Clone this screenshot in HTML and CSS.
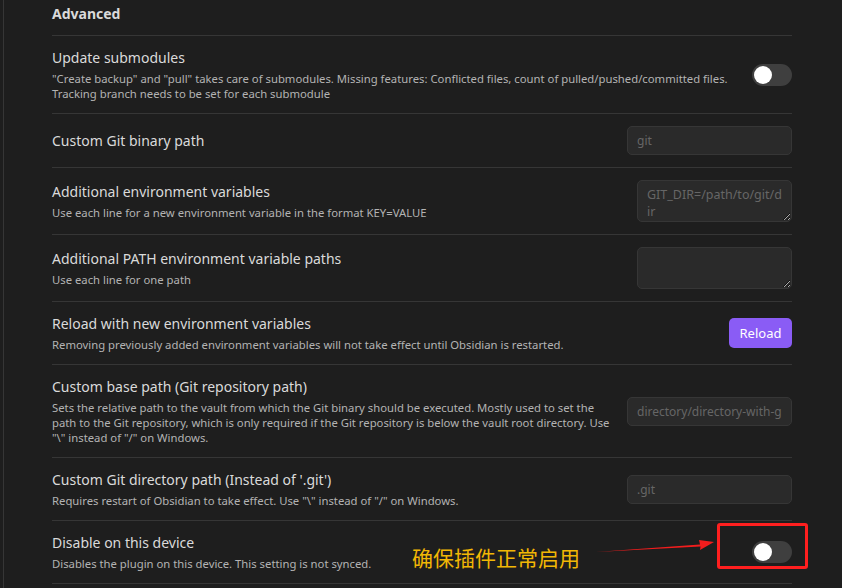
FILE: index.html
```html
<!DOCTYPE html>
<html lang="en">
<head>
<meta charset="utf-8">
<title>Git settings – Advanced</title>
<link rel="stylesheet" href="styles.css">
</head>
<body>
<div class="app">
  <div class="rail"></div>
  <main class="settings">
    <div class="setting-item heading">
      <div class="setting-info"><div class="setting-name">Advanced</div></div>
    </div>

    <div class="setting-item">
      <div class="setting-info">
        <div class="setting-name">Update submodules</div>
        <div class="setting-desc">"Create backup" and "pull" takes care of submodules. Missing features: Conflicted files, count of pulled/pushed/committed files.<br>Tracking branch needs to be set for each submodule</div>
      </div>
      <div class="setting-control"><div class="toggle"><span class="knob"></span></div></div>
    </div>

    <div class="setting-item">
      <div class="setting-info">
        <div class="setting-name">Custom Git binary path</div>
      </div>
      <div class="setting-control"><input class="text-input" type="text" placeholder="git"></div>
    </div>

    <div class="setting-item">
      <div class="setting-info">
        <div class="setting-name">Additional environment variables</div>
        <div class="setting-desc">Use each line for a new environment variable in the format KEY=VALUE</div>
      </div>
      <div class="setting-control"><textarea class="text-area" placeholder="GIT_DIR=/path/to/git/dir"></textarea></div>
    </div>

    <div class="setting-item">
      <div class="setting-info">
        <div class="setting-name">Additional PATH environment variable paths</div>
        <div class="setting-desc">Use each line for one path</div>
      </div>
      <div class="setting-control"><textarea class="text-area"></textarea></div>
    </div>

    <div class="setting-item">
      <div class="setting-info">
        <div class="setting-name">Reload with new environment variables</div>
        <div class="setting-desc">Removing previously added environment variables will not take effect until Obsidian is restarted.</div>
      </div>
      <div class="setting-control"><button class="mod-cta" type="button">Reload</button></div>
    </div>

    <div class="setting-item">
      <div class="setting-info">
        <div class="setting-name">Custom base path (Git repository path)</div>
        <div class="setting-desc">Sets the relative path to the vault from which the Git binary should be executed. Mostly used to set the<br>path to the Git repository, which is only required if the Git repository is below the vault root directory. Use<br>"\" instead of "/" on Windows.</div>
      </div>
      <div class="setting-control"><input class="text-input" type="text" placeholder="directory/directory-with-git-repo"></div>
    </div>

    <div class="setting-item">
      <div class="setting-info">
        <div class="setting-name">Custom Git directory path (Instead of '.git')</div>
        <div class="setting-desc">Requires restart of Obsidian to take effect. Use "\" instead of "/" on Windows.</div>
      </div>
      <div class="setting-control"><input class="text-input" type="text" placeholder=".git"></div>
    </div>

    <div class="setting-item last">
      <div class="setting-info">
        <div class="setting-name">Disable on this device</div>
        <div class="setting-desc">Disables the plugin on this device. This setting is not synced.</div>
      </div>
      <div class="setting-control"><div class="toggle"><span class="knob"></span></div></div>
    </div>
  </main>

  <div class="annotation-text">确保插件正常启用</div>
  <svg class="annotation-arrow" width="130" height="30" viewBox="0 0 130 30" aria-hidden="true">
    <polygon points="0,19 104,11.5 103,7 118,9 104,17 104.5,13.5" fill="#f21d1d"/>
  </svg>
  <div class="annotation-box"></div>
</div>
</body>
</html>
```

FILE: styles.css
```css
html, body {
  margin: 0;
  padding: 0;
  background: #1e1e1e;
}

body {
  font-family: "Noto Sans", "Open Sans", sans-serif;
  color: #dadada;
  width: 842px;
  height: 588px;
  overflow: hidden;
}

.app {
  position: relative;
  display: flex;
  height: 588px;
}

.rail {
  width: 3px;
  flex: 0 0 3px;
  border-right: 1px solid #363636;
}

.settings {
  flex: 1 1 auto;
  padding: 0 50px 0 48px;
}

.setting-item {
  display: flex;
  align-items: center;
  padding: 12px 0;
  border-top: 1px solid #363636;
}

.setting-item.heading {
  border-top: none;
  padding: 4px 0 11px;
}

.setting-item.last {
  border-bottom: 1px solid #363636;
}

.setting-info {
  flex: 1 1 auto;
  min-width: 0;
  margin-right: 16px;
}

.setting-name {
  font-size: 14px;
  line-height: 19px;
  color: #dadada;
}

.heading .setting-name {
  font-weight: 700;
  line-height: 20px;
}

.setting-desc {
  padding-top: 4px;
  font-size: 11.3px;
  line-height: 15px;
  color: #b3b3b3;
  white-space: nowrap;
}

.setting-control {
  flex: 0 0 auto;
  display: flex;
  justify-content: flex-end;
}

.toggle {
  position: relative;
  width: 40px;
  height: 22px;
  border-radius: 11px;
  background: #3f3f3f;
}

.knob {
  position: absolute;
  left: 2px;
  top: 2px;
  width: 18px;
  height: 18px;
  border-radius: 50%;
  background: #ffffff;
}

.text-input,
.text-area {
  box-sizing: border-box;
  background: #2a2a2a;
  border: 1px solid #363636;
  border-radius: 5px;
  color: #dadada;
  font-family: "Noto Sans", "Open Sans", sans-serif;
  font-size: 12px;
  outline: none;
  margin: 0;
}

.text-input {
  width: 165px;
  height: 29px;
  padding: 0 9px;
}

.text-area {
  width: 155px;
  height: 42px;
  padding: 5px 9px;
  line-height: 17px;
  font-size: 12.5px;
  resize: both;
  overflow: hidden;
}

.text-input::placeholder,
.text-area::placeholder {
  color: #666666;
  opacity: 1;
}

.mod-cta {
  width: 63px;
  height: 30px;
  border: none;
  border-radius: 5px;
  background: #8a5cf5;
  color: #ffffff;
  font-family: "Noto Sans", "Open Sans", sans-serif;
  font-size: 13px;
  padding: 0;
}

.annotation-text {
  position: absolute;
  left: 412px;
  top: 543px;
  font-family: "Noto Sans CJK SC", sans-serif;
  font-size: 21px;
  line-height: 28px;
  color: #f2b705;
  white-space: nowrap;
}

.annotation-arrow {
  position: absolute;
  left: 596px;
  top: 533px;
}

.annotation-box {
  position: absolute;
  left: 717px;
  top: 523px;
  width: 85px;
  height: 40px;
  border: 3px solid #ff1f1f;
  border-radius: 3px;
}
```
